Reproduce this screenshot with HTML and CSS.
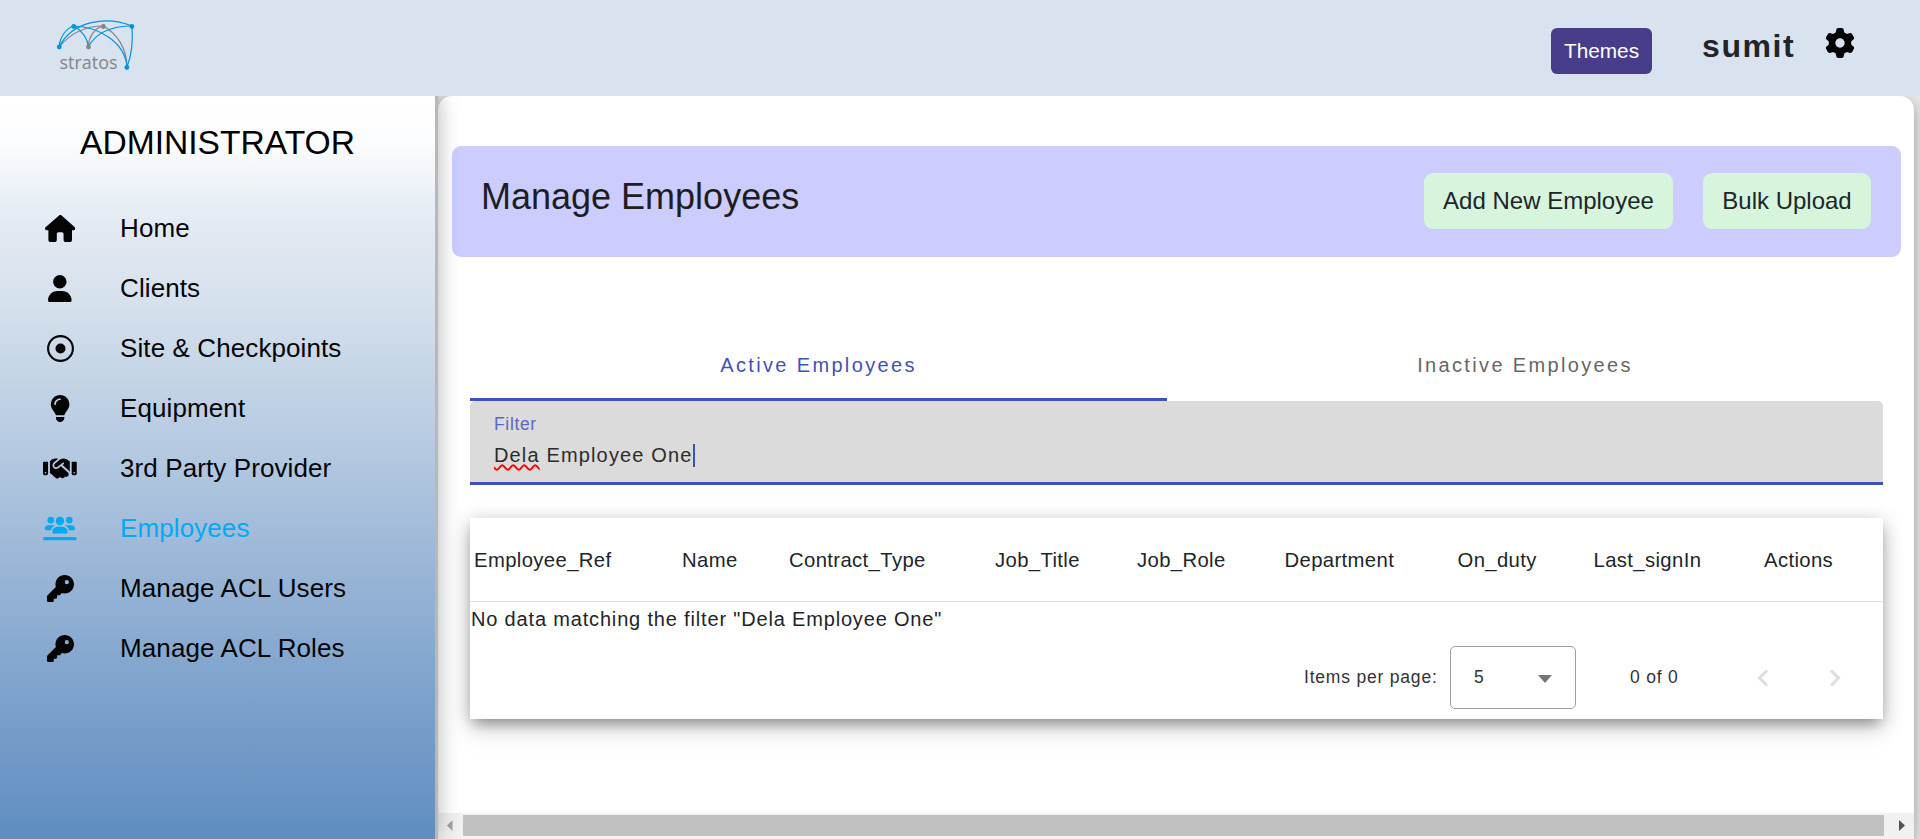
FILE: index.html
```html
<!DOCTYPE html>
<html lang="en">
<head>
<meta charset="utf-8">
<title>Manage Employees</title>
<link rel="stylesheet" href="styles.css">
</head>
<body>
<header class="topbar">
  <svg class="logo" viewBox="0 0 80 62" width="80" height="62">
    <g fill="none" stroke="#828588" stroke-width="1.200">
      <path d="M4 30C15 17 30 9 48 9"/><path d="M33 30C34 19 40 11 48 9"/><path d="M48 9C62 16 72 32 72 50"/>
    </g>
    <g fill="none" stroke="#0095e0" stroke-width="1.200">
      <path d="M4 30C5 20 11 11 19 9"/><path d="M4 30C18 3 52-1 77 9"/><path d="M19 9C26 13 33 21 33 30"/><path d="M33 30C41 16 56 9 77 9"/><path d="M19 9C44 10 70 25 72 50"/><path d="M77 9C78 24 76 40 72 50"/>
    </g>
    <g fill="#0095e0"><circle cx="4.300" cy="30" r="2.400"/><circle cx="18.700" cy="9.500" r="2.400"/><circle cx="76.900" cy="9.500" r="2.400"/><circle cx="71.900" cy="50.500" r="2.400"/></g>
    <g fill="#828588"><circle cx="48.300" cy="9.500" r="2.400"/><circle cx="33.500" cy="30" r="2.400"/></g>
    <text class="logo-text" x="4.500" y="51.500" textLength="58" lengthAdjust="spacingAndGlyphs">stratos</text>
  </svg>
  <button class="themes">Themes</button>
  <span class="user">sumit</span>
  <svg class="gear" viewBox="0 0 512 512" width="30" height="30"><path d="M495.900 166.600c3.200 8.700 .5 18.400-6.400 24.600l-43.300 39.400c1.100 8.300 1.700 16.800 1.700 25.400s-.6 17.100-1.700 25.400l43.300 39.400c6.900 6.200 9.600 15.900 6.400 24.600c-4.400 11.900-9.700 23.300-15.800 34.300l-4.700 8.100c-6.600 11-14 21.400-22.100 31.200c-5.900 7.200-15.700 9.600-24.500 6.800l-55.700-17.700c-13.400 10.300-28.200 18.900-44 25.400l-12.500 57.100c-2 9.100-9 16.300-18.200 17.800c-13.800 2.300-28 3.500-42.500 3.500s-28.700-1.200-42.500-3.500c-9.200-1.500-16.200-8.700-18.200-17.800l-12.500-57.100c-15.800-6.500-30.600-15.100-44-25.400L83.100 425.900c-8.800 2.800-18.600 .3-24.500-6.800c-8.100-9.800-15.500-20.200-22.100-31.200l-4.700-8.100c-6.100-11-11.400-22.400-15.800-34.300c-3.200-8.700-.5-18.400 6.400-24.600l43.300-39.400C64.600 273.100 64 264.600 64 256s.6-17.100 1.700-25.400L22.400 191.200c-6.900-6.200-9.600-15.900-6.400-24.600c4.400-11.900 9.700-23.300 15.800-34.300l4.700-8.100c6.600-11 14-21.400 22.100-31.200c5.900-7.200 15.700-9.600 24.500-6.800l55.700 17.700c13.400-10.300 28.200-18.900 44-25.400l12.500-57.100c2-9.100 9-16.300 18.200-17.800C227.300 1.200 241.500 0 256 0s28.700 1.200 42.500 3.500c9.200 1.500 16.200 8.700 18.200 17.800l12.500 57.100c15.800 6.500 30.600 15.100 44 25.400l55.700-17.700c8.800-2.800 18.600-.3 24.500 6.800c8.100 9.800 15.500 20.200 22.100 31.200l4.700 8.100c6.100 11 11.400 22.400 15.800 34.300zM256 336a80 80 0 1 0 0-160 80 80 0 1 0 0 160z"/></svg>
</header>
<div class="body">
  <nav class="sidebar">
    <h2 class="role">ADMINISTRATOR</h2>
    <a class="item"><span class="ico"><svg viewBox="0 0 576 512" height="27"><path d="M575.800 255.500c0 18-15 32.100-32 32.100h-32l.7 160.200c0 2.700-.2 5.400-.5 8.100V472c0 22.100-17.900 40-40 40H392c-22.100 0-40-17.900-40-40V360c0-17.700-14.300-32-32-32H256c-17.700 0-32 14.300-32 32v112c0 22.100-17.900 40-40 40H104c-22.100 0-40-17.900-40-40V287.600H32c-18 0-32-14-32-32.100c0-9 3-17 10-24L266.400 8c7-7 15-8 22-8s15 2 21 7L564.800 231.500c8 7 12 15 11 24z"/></svg></span>Home</a>
    <a class="item"><span class="ico"><svg viewBox="0 0 448 512" height="27"><path d="M224 256A128 128 0 1 0 224 0a128 128 0 1 0 0 256zm-45.700 48C79.800 304 0 383.800 0 482.300C0 498.700 13.300 512 29.700 512H418.300c16.400 0 29.700-13.300 29.700-29.700C448 383.800 368.200 304 269.700 304H178.300z"/></svg></span>Clients</a>
    <a class="item"><span class="ico"><svg viewBox="0 0 27 27" height="27"><circle cx="13.500" cy="13.500" r="12.400" fill="none" stroke="currentColor" stroke-width="2.100"/><circle cx="13.500" cy="13.500" r="5"/></svg></span>Site &amp; Checkpoints</a>
    <a class="item"><span class="ico"><svg viewBox="0 0 384 512" height="27"><path d="M272 384c9.600-31.900 29.500-59.100 49.200-86.200c5.200-7.100 10.400-14.200 15.400-21.400c19.800-28.500 31.400-63 31.400-100.300C368 78.800 289.200 0 192 0S16 78.800 16 176c0 37.300 11.600 71.900 31.400 100.300c5 7.200 10.200 14.300 15.400 21.400c19.800 27.100 39.700 54.400 49.200 86.200H272zM192 512c44.200 0 80-35.800 80-80V416H112v16c0 44.200 35.800 80 80 80zM112 176c0 8.800-7.200 16-16 16s-16-7.200-16-16c0-61.900 50.100-112 112-112c8.800 0 16 7.200 16 16s-7.200 16-16 16c-44.200 0-80 35.800-80 80z"/></svg></span>Equipment</a>
    <a class="item"><span class="ico"><svg viewBox="0 0 640 512" height="27"><path d="M323.400 85.200l-96.800 78.400c-16.100 13-19.200 36.400-7 53.100c12.900 17.800 38 21.300 55.300 7.800l99.300-77.200c7-5.400 17-4.200 22.500 2.800s4.200 17-2.800 22.500L373 188.800 508 313V125l-67.200-47.800C426.300 70.200 408.800 64 390.600 64c-24.300 0-48.500 7.500-67.200 21.200zM339.300 215.600l-44.700 34.800c-31.500 24.400-77 18-100.300-14c-22.600-31.100-16.900-74.500 12.900-98.700l80-64.700C272 67.100 255.500 64 238.800 64C213.300 64 188.200 71.700 167 86.100L132 118V352h16.200l91.400 83.400c19.600 17.900 49.900 16.500 67.800-3.100c5.500-6.100 9.200-13.200 11.100-20.600l17 15.600c19.500 17.900 49.900 16.600 67.800-2.900c4.500-4.900 7.800-10.600 9.900-16.500c19.400 13 45.800 10.300 62.100-7.500c17.900-19.500 16.600-49.900-2.900-67.800zM16 128c-8.800 0-16 7.200-16 16V352c0 17.700 14.300 32 32 32H64c17.700 0 32-14.300 32-32V128H16zM48 320a16 16 0 1 1 0 32 16 16 0 1 1 0-32zM544 128V352c0 17.700 14.300 32 32 32h32c17.700 0 32-14.300 32-32V144c0-8.800-7.200-16-16-16H544zm32 208a16 16 0 1 1 32 0 16 16 0 1 1-32 0z"/></svg></span>3rd Party Provider</a>
    <a class="item active"><span class="ico"><svg viewBox="0 0 640 512" height="27"><path d="M211.200 96a64 64 0 1 0-128 0 64 64 0 1 0 128 0zM32 256c0 17.700 14.300 32 32 32h85.600c10.100-39.400 38.600-71.500 75.800-86.600C215.700 195.400 204.200 192 192 192H96c-35.300 0-64 28.700-64 64zm461.600 32H576c17.700 0 32-14.300 32-32c0-35.300-28.700-64-64-64H448c-11.700 0-22.700 3.100-32.100 8.600c38.100 14.800 67.400 47.300 77.700 87.400zM391.200 226.400c-6.900-1.600-14.200-2.400-21.600-2.400h-96c-8.500 0-16.700 1.100-24.500 3.100c-30.800 8.100-55.600 31.100-66.100 60.900c-3.500 10-5.500 20.800-5.500 32c0 17.700 14.300 32 32 32h224c17.700 0 32-14.300 32-32c0-11.200-1.900-22-5.500-32c-10.800-30.700-36.800-54.200-68.900-61.600zM563.200 96a64 64 0 1 0-128 0 64 64 0 1 0 128 0zM321.600 192a80 80 0 1 0 0-160 80 80 0 1 0 0 160zM32 416c-17.700 0-32 14.300-32 32s14.300 32 32 32H608c17.700 0 32-14.300 32-32s-14.300-32-32-32H32z"/></svg></span>Employees</a>
    <a class="item"><span class="ico"><svg viewBox="0 0 512 512" height="27"><path d="M336 352c97.200 0 176-78.800 176-176S433.200 0 336 0S160 78.800 160 176c0 18.700 2.900 36.800 8.300 53.700L7 391c-4.500 4.500-7 10.600-7 17v80c0 13.300 10.700 24 24 24h80c13.300 0 24-10.700 24-24V448h40c13.300 0 24-10.700 24-24V384h40c6.400 0 12.500-2.500 17-7l33.300-33.300c16.900 5.400 35 8.300 53.700 8.300zM376 96a40 40 0 1 1 0 80 40 40 0 1 1 0-80z"/></svg></span>Manage ACL Users</a>
    <a class="item"><span class="ico"><svg viewBox="0 0 512 512" height="27"><path d="M336 352c97.200 0 176-78.800 176-176S433.200 0 336 0S160 78.800 160 176c0 18.700 2.900 36.800 8.300 53.700L7 391c-4.500 4.500-7 10.600-7 17v80c0 13.300 10.700 24 24 24h80c13.300 0 24-10.700 24-24V448h40c13.300 0 24-10.700 24-24V384h40c6.400 0 12.500-2.500 17-7l33.300-33.300c16.900 5.400 35 8.300 53.700 8.300zM376 96a40 40 0 1 1 0 80 40 40 0 1 1 0-80z"/></svg></span>Manage ACL Roles</a>
  </nav>
  <main class="main">
    <div class="content">
      <section class="banner">
        <h1 class="title">Manage Employees</h1>
        <button class="action">Add New Employee</button>
        <button class="action bulk">Bulk Upload</button>
      </section>
      <div class="tabs"><div class="tab on">Active Employees</div><div class="tab">Inactive Employees</div></div>
      <div class="filter">
        <label class="label">Filter</label>
        <div class="value"><span class="typo">Dela</span> Employee One<i class="caret"></i></div>
      </div>
      <section class="card">
        <div class="thead"><span>Employee_Ref</span><span>Name</span><span>Contract_Type</span><span>Job_Title</span><span>Job_Role</span><span>Department</span><span>On_duty</span><span>Last_signIn</span><span>Actions</span></div>
        <p class="empty">No data matching the filter "Dela Employee One"</p>
        <div class="pager">
          <span class="per">Items per page:</span>
          <div class="select"><span>5</span><svg width="14" height="8" viewBox="0 0 14 8"><path d="M0 0h14L7 8z" fill="#757575"/></svg></div>
          <span class="range">0 of 0</span>
          <svg class="prev" width="12" height="18" viewBox="0 0 12 18"><path d="M10 1.500 2.500 9l7.500 7.500"/></svg>
          <svg class="next" width="12" height="18" viewBox="0 0 12 18"><path d="m2 1.500 7.500 7.500L2 16.500"/></svg>
        </div>
      </section>
    </div>
    <div class="scroll">
      <svg width="25" height="26" viewBox="0 0 25 26"><path d="M14.500 7v11L9 12.500z" fill="#a3a3a3"/></svg>
      <div class="thumb"></div>
      <svg width="30" height="26" viewBox="0 0 30 26"><path d="M15 7v11l6-5.500z" fill="#505050"/></svg>
    </div>
  </main>
</div>
</body>
</html>
```
FILE: styles.css
```css
* { box-sizing: border-box; }
body { margin: 0; width: 1920px; height: 839px; overflow: hidden; background: #fff; color: #212529; font-family: "Liberation Sans", Arial, sans-serif; }
h1, h2, p { margin: 0; font-weight: 400; }
button { border: 0; padding: 0; font: inherit; color: inherit; }
.topbar { position: relative; z-index: 2; display: flex; align-items: flex-start; height: 96px; background: #d9e3ef; }
.logo { margin: 17px auto 0 55px; overflow: visible; }
.logo-text { font: 18.500px "Open Sans", sans-serif; fill: #828588; }
.themes { width: 101px; height: 46px; margin-top: 28px; border-radius: 6px; background: #483d8b; color: #fff; font-size: 20.800px; line-height: 46px; }
.user { margin: 28px 0 0 50px; width: 123px; font-size: 32px; line-height: 37px; font-weight: 700; letter-spacing: 1.600px; }
.gear { margin: 28px 65px 0 0; }
.body { display: flex; height: 743px; background: #e9e9e9; }
.sidebar { z-index: 1; width: 435px; height: 743px; background: linear-gradient(#fff 0%, #fcfdfe 6%, #e9eff6 14%, #e2e8f2 19%, #d5e1ed 28%, #c2d3e5 39%, #b6cae2 47%, #a8c0dc 55%, #83a6ce 77%, #5f8dc1 100%); color: #050505; box-shadow: 3px 0 0 #b8b8b8, 3px 0 20px rgba(0,0,0,.3); }
.role { height: 102px; padding-top: 28px; text-align: center; font-size: 33.600px; line-height: 38px; color: #000; }
.item { display: flex; align-items: center; height: 60px; font-size: 26px; line-height: 60px; letter-spacing: .1px; }
.ico { display: flex; justify-content: center; width: 120px; padding-top: 1px; }
.ico svg { fill: currentColor; }
.active { color: #03a9f4; }
.main { display: flex; flex-direction: column; width: 1476px; height: 743px; margin-left: 3px; border-radius: 14px 14px 0 0; background: #fff; box-shadow: 0 5px 15px rgba(0,0,0,.35); overflow: hidden; }
.content { height: 717px; padding: 50px 13px 0 14px; }
.banner { display: flex; height: 111px; padding: 0 30px; border-radius: 9px; background: #ccf; }
.title { flex: 1; padding-top: 30px; font-size: 36px; line-height: 42px; color: #1e1e22; margin-left: -1px; }
.action { width: 249px; height: 56px; margin-top: 27px; border-radius: 9px; background: #d7f5dd; font-size: 24px; line-height: 56px; }
.bulk { width: 168px; margin-left: 30px; }
.tabs { display: flex; height: 84px; margin: 60px 18px 0; font-size: 20px; letter-spacing: 2.350px; color: #666; }
.tab { width: 697px; padding-top: 15px; border-bottom: 0 solid #3f51b5; line-height: 66px; text-align: center; }
.tab:last-child { width: 716px; }
.on { border-bottom-width: 3px; color: #3f51b5; }
.filter { height: 84px; margin: 0 18px; padding: 12px 24px; border-bottom: 3px solid #3f51b5; border-radius: 5px 5px 0 0; background: #dbdbdb; }
.label { display: block; font-size: 17.500px; line-height: 22px; letter-spacing: .65px; color: #5b69bd; }
.value { display: flex; align-items: center; height: 41px; white-space: pre; font-size: 20px; letter-spacing: 1.150px; color: #2b2b2b; }
.typo { text-decoration: underline wavy #f00 1.500px; text-underline-offset: 2px; text-decoration-skip-ink: none; }
.caret { width: 2px; height: 23px; background: #3f51b5; }
.card { height: 201px; margin: 33px 18px 0; background: #fff; box-shadow: 0 9px 11px -5px rgba(0,0,0,.2), 0 18px 28px 2px rgba(0,0,0,.04), 0 5px 18px rgba(0,0,0,.32); }
.thead { display: grid; grid-template-columns: 208px 107px 206px 142px 147.500px 173px 136px 170.500px 1fr; height: 84px; padding-left: 4px; border-bottom: 1px solid #e0e0e0; font-size: 20.300px; line-height: 84px; letter-spacing: .37px; }
.empty { height: 44px; padding-left: 1px; font-size: 20px; line-height: 34px; letter-spacing: .83px; }
.pager { display: flex; align-items: center; height: 63px; font-size: 17.500px; color: #333; letter-spacing: .8px; }
.per { width: 146px; margin-left: 834px; }
.select { display: flex; align-items: center; justify-content: space-between; width: 126px; height: 63px; padding: 0 23px; border: 1px solid #9e9e9e; border-radius: 5px; }
.select svg { margin-top: 3px; }
.range { width: 127px; margin-left: 54px; }
.prev, .next { fill: none; stroke: #dedede; stroke-width: 3px; }
.next { margin-left: 60px; }
.scroll { display: flex; align-items: flex-start; height: 26px; background: #f1f1f1; }
.thumb { flex: 1; height: 21px; margin-top: 2px; background: #c1c1c1; }
```
